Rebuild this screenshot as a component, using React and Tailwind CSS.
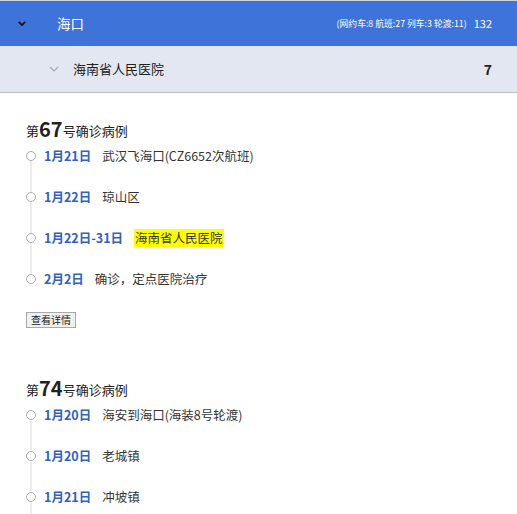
import React from "react";

const font = { fontFamily: '"Noto Sans CJK SC", "Noto Sans", "Liberation Sans", sans-serif' };

const cases = [
  {
    no: "67",
    items: [
      { date: "1月21日", text: "武汉飞海口(CZ6652次航班)" },
      { date: "1月22日", text: "琼山区" },
      { date: "1月22日-31日", text: "海南省人民医院", mark: true },
      { date: "2月2日", text: "确诊，定点医院治疗" },
    ],
  },
  {
    no: "74",
    items: [
      { date: "1月20日", text: "海安到海口(海装8号轮渡)" },
      { date: "1月20日", text: "老城镇" },
      { date: "1月21日", text: "冲坡镇" },
      { date: "1月22日", text: "海口市" },
    ],
  },
];

const Chevron = ({ className, strokeWidth = 2 }) => (
  <svg viewBox="0 0 10 6" className={className} fill="none" stroke="currentColor" strokeWidth={strokeWidth}>
    <path d="M1 1l4 4 4-4" />
  </svg>
);

const TimelineItem = ({ item, first, last }) => (
  <div className={`flex gap-[8px] ${last ? "" : "h-[41px]"}`}>
    <div className="flex w-[10px] flex-col items-center">
      <div className={`h-[4px] w-[2px] ${first ? "" : "bg-[#ececec]"}`} />
      <div className="h-[10px] w-[10px] shrink-0 rounded-full border-[1.5px] border-[#a8abb0] bg-white" />
      {!last && <div className="w-[2px] flex-1 bg-[#ececec]" />}
    </div>
    <div className="flex h-[18px] items-center text-[12.5px] leading-[18px]">
      <span className="font-bold text-[#2f61c6]">{item.date}</span>
      <span className={`ml-[11px] text-[#333] ${item.mark ? "bg-[#ffff00] px-px" : ""}`}>
        {item.text}
      </span>
    </div>
  </div>
);

const CaseBlock = ({ data, showButton }) => (
  <div className="flex flex-col">
    <div className="flex h-[20px] items-end text-[13px] leading-[18px] text-[#222]">
      <span>第</span>
      <span className="text-[20px] font-bold leading-[22px]">{data.no}</span>
      <span>号确诊病例</span>
    </div>
    <div className="mt-[7px] flex flex-col">
      {data.items.map((item, i) => (
        <TimelineItem
          key={i}
          item={item}
          first={i === 0}
          last={showButton && i === data.items.length - 1}
        />
      ))}
    </div>
    {showButton && (
      <div className="mt-[24px] flex">
        <button className="flex h-[16px] items-center border border-[#a8a8a8] bg-[#f0f0f0] px-[4px] text-[10px] leading-[14px] text-[#222]">
          查看详情
        </button>
      </div>
    )}
  </div>
);

export default function App() {
  return (
    <div className="h-[514px] w-full overflow-hidden bg-white" style={font}>
      <div className="flex h-[46px] items-center border-t border-[#cdd3de] bg-[#3e74da] pr-[25px] text-white">
        <div className="flex w-[57px] pl-[18px]">
          <Chevron className="h-[5px] w-[8px] text-[#111]" strokeWidth={2.2} />
        </div>
        <span className="text-[13.5px]">海口</span>
        <div className="ml-auto flex items-center gap-[7px]">
          <span className="text-[8.8px]">(网约车:8 航班:27 列车:3 轮渡:11)</span>
          <span className="text-[11px]">132</span>
        </div>
      </div>
      <div className="flex h-[47px] items-center border-b border-[#b9bcc2] bg-[#e3e7f1] pr-[25px]">
        <div className="flex w-[73px] pl-[49px]">
          <Chevron className="h-[6px] w-[10px] text-[#a5a8ad]" strokeWidth={1.2} />
        </div>
        <span className="text-[13px] text-[#222]">海南省人民医院</span>
        <span className="ml-auto text-[14px] font-semibold text-[#222]">7</span>
      </div>
      <div className="flex flex-col gap-[51px] pl-[26px] pt-[27px]">
        <CaseBlock data={cases[0]} showButton />
        <CaseBlock data={cases[1]} />
      </div>
    </div>
  );
}
